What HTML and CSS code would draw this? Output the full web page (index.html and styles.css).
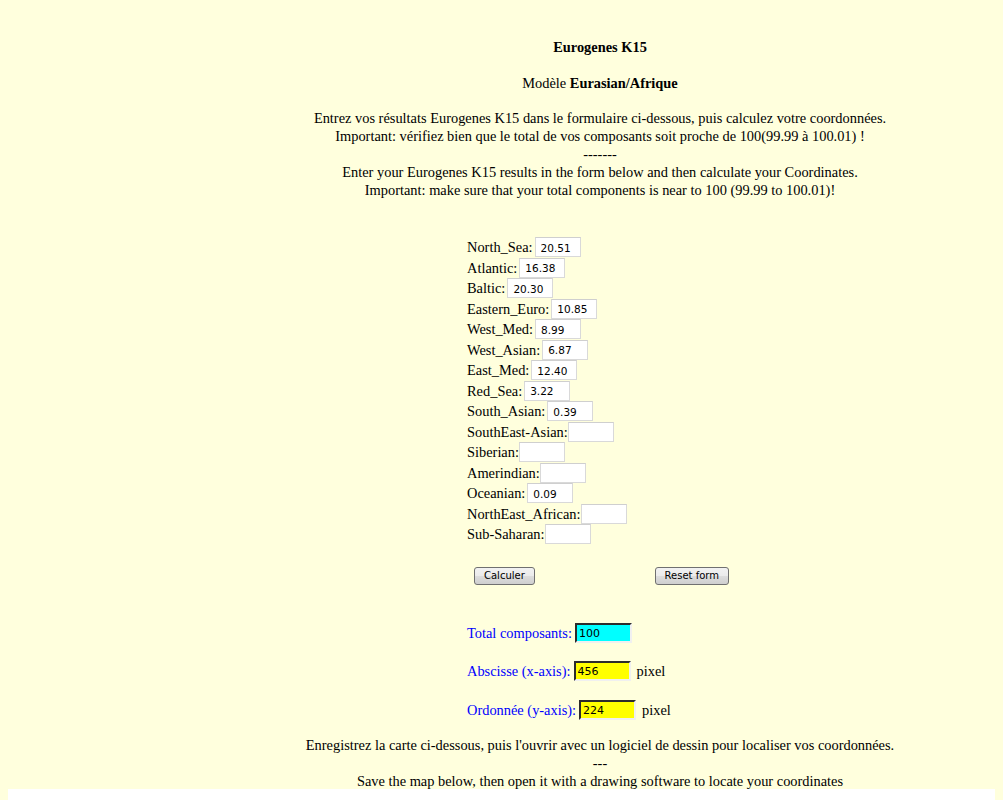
FILE: index.html
```html
<!DOCTYPE html>
<html lang="fr">
<head>
<meta charset="utf-8">
<title>Eurogenes K15 - Modèle Eurasian/Afrique</title>
<link rel="stylesheet" href="styles.css">
</head>
<body>
<div class="page">
  <div class="title"><b>Eurogenes K15</b></div>
  <div class="model">Modèle <b>Eurasian/Afrique</b></div>
  <div class="intro">
    Entrez vos résultats Eurogenes K15 dans le formulaire ci-dessous, puis calculez votre coordonnées.<br>
    Important: vérifiez bien que le total de vos composants soit proche de 100(99.99 à 100.01) !<br>
    -------<br>
    Enter your Eurogenes K15 results in the form below and then calculate your Coordinates.<br>
    Important: make sure that your total components is near to 100 (99.99 to 100.01)!
  </div>

  <form class="calc">
    <div class="row">North_Sea:<input class="field" type="text" value="20.51"></div>
    <div class="row">Atlantic:<input class="field" type="text" value="16.38"></div>
    <div class="row">Baltic:<input class="field" type="text" value="20.30"></div>
    <div class="row">Eastern_Euro:<input class="field" type="text" value="10.85"></div>
    <div class="row">West_Med:<input class="field" type="text" value="8.99"></div>
    <div class="row">West_Asian:<input class="field" type="text" value="6.87"></div>
    <div class="row">East_Med:<input class="field" type="text" value="12.40"></div>
    <div class="row">Red_Sea:<input class="field" type="text" value="3.22"></div>
    <div class="row">South_Asian:<input class="field" type="text" value="0.39"></div>
    <div class="row tight">SouthEast-Asian:<input class="field" type="text" value=""></div>
    <div class="row tight">Siberian:<input class="field" type="text" value=""></div>
    <div class="row tight">Amerindian:<input class="field" type="text" value=""></div>
    <div class="row">Oceanian:<input class="field" type="text" value="0.09"></div>
    <div class="row tight">NorthEast_African:<input class="field" type="text" value=""></div>
    <div class="row tight">Sub-Saharan:<input class="field" type="text" value=""></div>

    <div class="buttons">
      <button type="button" class="btn">Calculer</button>
      <button type="reset" class="btn">Reset form</button>
    </div>

    <div class="result">Total composants:<input class="out total" type="text" value="100" readonly></div>
    <div class="result">Abscisse (x-axis):<input class="out coord" type="text" value="456" readonly><span class="unit">pixel</span></div>
    <div class="result">Ordonnée (y-axis):<input class="out coord" type="text" value="224" readonly><span class="unit">pixel</span></div>
  </form>

  <div class="outro">
    Enregistrez la carte ci-dessous, puis l'ouvrir avec un logiciel de dessin pour localiser vos coordonnées.<br>
    ---<br>
    Save the map below, then open it with a drawing software to locate your coordinates
  </div>

  <div class="map"></div>
</div>
</body>
</html>
```

FILE: styles.css
```css
html, body {
  background: #ffffdd;
}

body {
  margin: 8px;
  font-family: "Liberation Serif", "Times New Roman", serif;
  font-size: 14.4px;
  line-height: 18px;
  color: #000;
}

.page {
  width: 1184px;
  text-align: center;
  padding-top: 30px;
}

.title {
  margin-bottom: 18px;
}

.model {
  margin-bottom: 17px;
}

.intro {
  margin-bottom: 38px;
}

/* input form: a narrow centred column, labels aligned left */
.calc {
  width: 266px;
  margin: 0 auto;
  text-align: left;
}

.row {
  height: 20.5px;
  display: flex;
  align-items: center;
  gap: 2px;
  white-space: nowrap;
}

.row.tight {
  gap: 0;
}

.field {
  box-sizing: border-box;
  width: 46px;
  height: 20px;
  margin: 0;
  padding: 1px 2px 0 5px;
  border: 1px solid #d9d9d9;
  border-top-color: #cfcfcf;
  background: #fff;
  font-family: "DejaVu Sans", Tahoma, sans-serif;
  font-size: 10.5px;
  color: #000;
  outline: none;
}

.buttons {
  display: flex;
  justify-content: space-between;
  padding: 0 4px 0 7px;
  margin-top: 22px;
  margin-bottom: 38px;
}

.btn {
  box-sizing: border-box;
  height: 18px;
  padding: 0 9px;
  margin: 0;
  border: 1px solid #707070;
  border-radius: 3px;
  background: linear-gradient(#f2f2f2 0%, #ebebeb 50%, #dddddd 51%, #cfcfcf 100%);
  font-family: "DejaVu Sans", Tahoma, sans-serif;
  font-size: 10px;
  line-height: 16px;
  color: #000;
}

.result {
  height: 20px;
  display: flex;
  align-items: center;
  gap: 3px;
  color: #0000ff;
  white-space: nowrap;
  margin-bottom: 18.5px;
}

.out {
  box-sizing: border-box;
  width: 57px;
  height: 20px;
  margin: 0;
  padding: 1px 2px 0 2px;
  border: 2px inset #f0f0f0;
  border-top-color: #808080;
  border-left-color: #808080;
  font-family: "DejaVu Sans", Tahoma, sans-serif;
  font-size: 11px;
  color: #000;
  outline: none;
}

.out.total {
  background: #00ffff;
}

.out.coord {
  background: #ffff00;
}

.unit {
  color: #000;
  margin-left: 3px;
}

.outro {
  margin-top: -2px;
}

/* the map sits below the text on a white ground */
.map {
  width: 1184px;
  height: 600px;
  background: #fff;
  margin-top: -1px;
}
```
